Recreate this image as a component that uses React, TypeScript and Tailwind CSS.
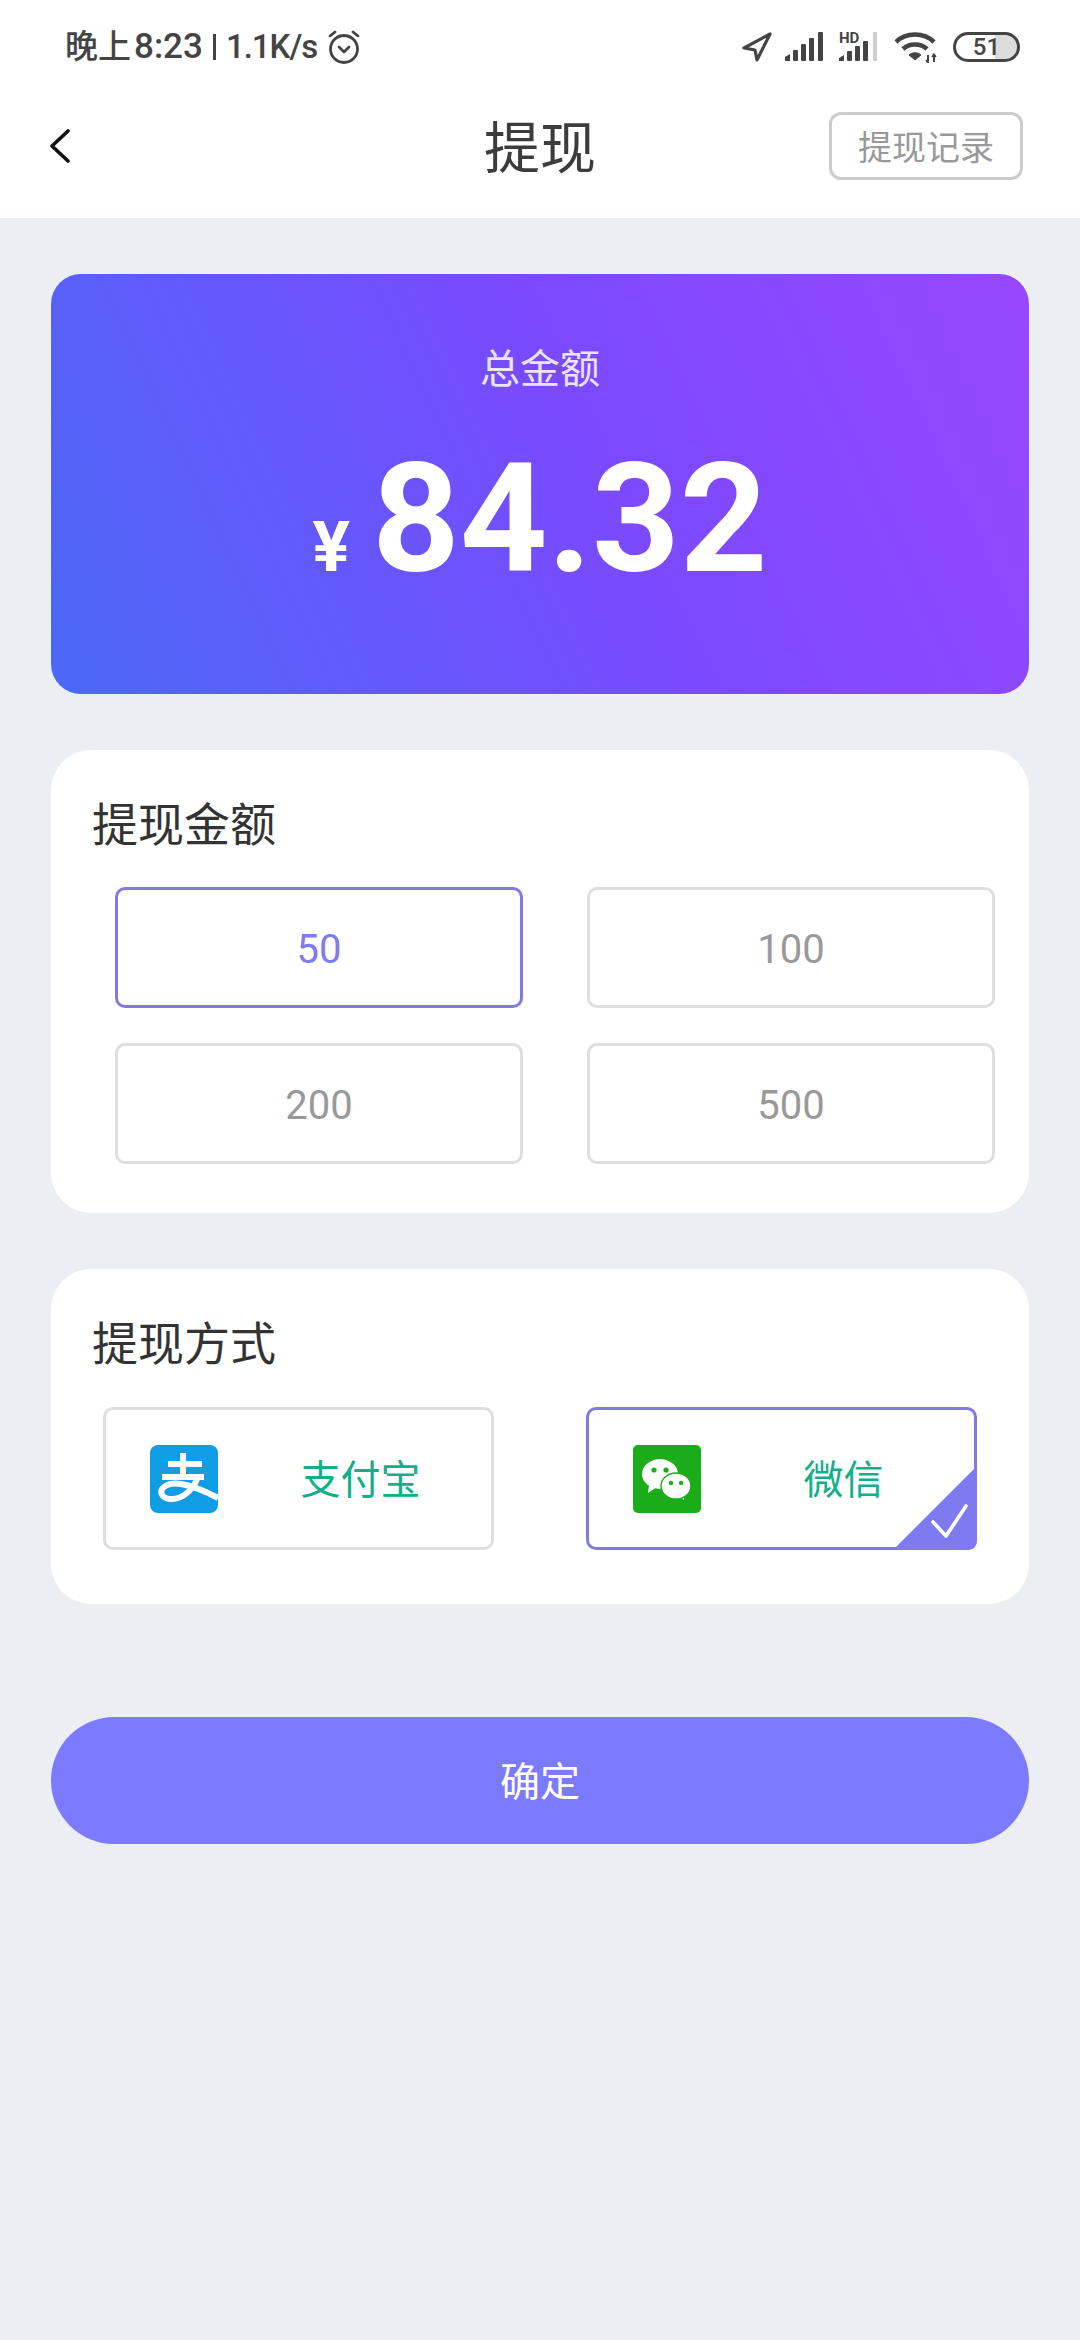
import React, { useState } from 'react';

const amounts = ['50', '100', '200', '500'];

const AlarmIcon = () => (
  <svg width="34" height="36" viewBox="0 0 34 36" fill="none" stroke="#444" strokeWidth="2.8" strokeLinecap="round" strokeLinejoin="round">
    <circle cx="17" cy="20" r="13.5" />
    <path d="M3 7 L8 3" />
    <path d="M31 7 L26 3" />
    <path d="M12 18 L17 23 L22 18" />
  </svg>
);

const LocationIcon = () => (
  <svg width="30" height="30" viewBox="0 0 30 30" fill="none" stroke="#444" strokeWidth="3.2" strokeLinejoin="round">
    <path d="M28 2 L2 16 L13 18 L15 28 Z" />
  </svg>
);

const SignalBars = () => (
  <svg width="40" height="30" viewBox="0 0 40 30" fill="#444">
    <path d="M0 29 L0 25 L5 22 L5 29 Z" />
    <rect x="8" y="18" width="5" height="11" rx="1" />
    <rect x="16" y="12" width="5" height="17" rx="1" />
    <rect x="24" y="6" width="5" height="23" rx="1" />
    <rect x="33" y="0" width="5" height="29" rx="1" />
  </svg>
);

const SignalHd = () => (
  <div className="relative h-[30px] w-[40px]">
    <svg width="40" height="30" viewBox="0 0 40 30" fill="#444">
      <path d="M0 29 L0 26 L5 23 L5 29 Z" />
      <rect x="8" y="19" width="5" height="10" rx="1" />
      <rect x="16" y="14" width="5" height="15" rx="1" />
      <rect x="24" y="9" width="5" height="20" rx="1" />
      <rect x="34" y="0" width="4" height="29" fill="#cfcfcf" />
    </svg>
    <span className="absolute -top-[2px] left-0 text-[15px] leading-[16px] font-bold text-[#444]">HD</span>
  </div>
);

const WifiIcon = () => (
  <svg width="44" height="31" viewBox="0 0 44 31" fill="none" stroke="#444" strokeWidth="4.6">
    <path d="M2 10 C12 0 30 0 40 10" />
    <path d="M9 17 C15 11 27 11 33 17" />
    <path d="M15 23 L21 28 L27 23 C24 20 18 20 15 23 Z" fill="#444" strokeWidth="1" />
    <path d="M34 23 L34 31 M40 22 L40 30" strokeWidth="2" />
    <path d="M32 28 L34 31 M38 25 L40 22 L42 25" strokeWidth="1.5" />
  </svg>
);

const BackIcon = () => (
  <svg width="22" height="34" viewBox="0 0 22 34" fill="none" stroke="#111" strokeWidth="3.6" strokeLinecap="round" strokeLinejoin="round">
    <path d="M19 2 L3 17 L19 32" />
  </svg>
);

const AlipayLogo = () => (
  <svg width="68" height="68" viewBox="0 0 68 68" className="shrink-0">
    <rect width="68" height="68" rx="8" fill="#0f9ee6" />
    <g fill="none" stroke="#fff" strokeWidth="6">
      <path d="M18 19 L52 19" />
      <path d="M33 8 L33 32" />
      <path d="M12 32 L54 32" />
      <path d="M48 32 C43 45 32 55 20 54 C11 53 9 46 14 42 C21 36 38 37 68 53" />
    </g>
  </svg>
);

const WechatLogo = () => (
  <svg width="68" height="68" viewBox="0 0 68 68" className="shrink-0">
    <rect width="68" height="68" rx="5" fill="#1aad19" />
    <path d="M15 48 L16 40 L24 42 Z" fill="#fff" />
    <ellipse cx="27" cy="29" rx="18" ry="15" fill="#fff" />
    <circle cx="21" cy="25" r="2.6" fill="#1aad19" />
    <circle cx="33" cy="25" r="2.6" fill="#1aad19" />
    <path d="M51 55 L50 48 L43 50 Z" fill="#fff" />
    <ellipse cx="43" cy="41" rx="15" ry="13" fill="#fff" stroke="#1aad19" strokeWidth="1.4" />
    <circle cx="38" cy="38" r="2.2" fill="#1aad19" />
    <circle cx="48" cy="38" r="2.2" fill="#1aad19" />
  </svg>
);

const CheckCorner = () => (
  <svg width="84" height="84" viewBox="0 0 84 84" className="absolute -right-[3px] -bottom-[3px]">
    <path d="M84 0 L84 74 Q84 84 74 84 L0 84 Z" fill="#7f7af0" />
    <path d="M40 56 L53 70 L73 40" fill="none" stroke="#fff" strokeWidth="3.6" strokeLinecap="round" strokeLinejoin="round" />
  </svg>
);

export default function App() {
  const [amount, setAmount] = useState('50');
  const [method, setMethod] = useState('wechat');

  return (
    <div className="min-h-[2340px] bg-[#ebeef2] font-[Roboto,'Noto_Sans_CJK_SC',sans-serif]">
      <header className="h-[218px] bg-white">
        <div className="flex h-[64px] items-start justify-between pt-[30px] pr-[60px] pl-[65px]">
          <div className="flex h-[34px] items-center text-[#444]">
            <span className="text-[33px] leading-[34px] font-medium">晚上</span>
            <span className="ml-[3px] text-[35px] leading-[34px] font-medium">8:23</span>
            <span className="ml-[10px] h-[26px] w-[3px] bg-[#444]" />
            <span className="ml-[10px] text-[33px] leading-[34px] font-medium tracking-[-1px]">1.1K/s</span>
            <div className="ml-[10px]"><AlarmIcon /></div>
          </div>
          <div className="flex h-[34px] items-center">
            <LocationIcon />
            <div className="ml-[13px]"><SignalBars /></div>
            <div className="ml-[14px]"><SignalHd /></div>
            <div className="ml-[15px]"><WifiIcon /></div>
            <div className="ml-[15px] flex h-[30px] w-[67px] items-center justify-center rounded-full border-[3px] border-[#444] bg-[linear-gradient(90deg,#fff_64%,#dcdcdc_64%)] text-[24px] leading-none font-medium text-[#444]">
              51
            </div>
          </div>
        </div>
        <div className="grid grid-cols-[1fr_auto_1fr] items-center px-[57px] pt-[48px]">
          <button className="-ml-[8px] justify-self-start"><BackIcon /></button>
          <h1 className="h-[68px] text-[56px] leading-[74px] font-normal text-[#3c3c3c]">提现</h1>
          <button className="h-[68px] w-[194px] justify-self-end rounded-[12px] border-[3px] border-[#cccccc] pt-[3px] text-[34px] leading-none text-[#999999]">
            提现记录
          </button>
        </div>
      </header>

      <main className="flex flex-col px-[51px] pt-[56px]">
        <section className="flex h-[420px] flex-col items-center rounded-[30px] bg-[linear-gradient(65deg,#4a69f6_0%,#7a4aff_55%,#9747ff_100%)] pt-[69px] text-white">
          <div className="text-[40px] leading-[54px] text-white/85">总金额</div>
          <div className="mt-[45px] flex items-baseline justify-center">
            <span className="mr-[22px] text-[70px] leading-none font-bold">¥</span>
            <span className="text-[153px] leading-none font-bold">84.32</span>
          </div>
        </section>

        <section className="mt-[56px] rounded-[40px] bg-white pt-[44px] pr-[34px] pb-[49px] pl-[41px]">
          <h2 className="text-[46px] leading-[62px] font-normal text-[#333]">提现金额</h2>
          <div className="mt-[31px] grid grid-cols-2 gap-x-[64px] gap-y-[35px] pl-[23px]">
            {amounts.map((a) => (
              <button
                key={a}
                onClick={() => setAmount(a)}
                className={
                  a === amount
                    ? 'h-[121px] rounded-[10px] border-[3px] border-[#7f7ae6] pt-[5px] text-[40px] text-[#7f7af0]'
                    : 'h-[121px] rounded-[10px] border-[3px] border-[#dedede] pt-[5px] text-[40px] text-[#999999]'
                }
              >
                {a}
              </button>
            ))}
          </div>
        </section>

        <section className="mt-[56px] rounded-[40px] bg-white px-[52px] pt-[44px] pb-[54px]">
          <h2 className="-ml-[11px] text-[46px] leading-[62px] font-normal text-[#333]">提现方式</h2>
          <div className="mt-[32px] grid grid-cols-2 gap-x-[92px]">
            <button
              onClick={() => setMethod('alipay')}
              className={
                method === 'alipay'
                  ? 'relative flex h-[143px] items-center rounded-[10px] border-[3px] border-[#7f7ae6] pl-[44px]'
                  : 'relative flex h-[143px] items-center rounded-[10px] border-[3px] border-[#dedede] pl-[44px]'
              }
            >
              <AlipayLogo />
              <span className="flex-1 pt-[5px] pl-[12px] text-center text-[40px] text-[#12b08a]">支付宝</span>
              {method === 'alipay' && <CheckCorner />}
            </button>
            <button
              onClick={() => setMethod('wechat')}
              className={
                method === 'wechat'
                  ? 'relative flex h-[143px] items-center rounded-[10px] border-[3px] border-[#7f7ae6] pl-[44px]'
                  : 'relative flex h-[143px] items-center rounded-[10px] border-[3px] border-[#dedede] pl-[44px]'
              }
            >
              <WechatLogo />
              <span className="flex-1 pt-[5px] pl-[12px] text-center text-[40px] text-[#12b08a]">微信</span>
              {method === 'wechat' && <CheckCorner />}
            </button>
          </div>
        </section>

        <button className="mt-[113px] h-[127px] rounded-full bg-[#7c7aff] pt-[5px] text-[40px] text-white">确定</button>
      </main>
    </div>
  );
}
